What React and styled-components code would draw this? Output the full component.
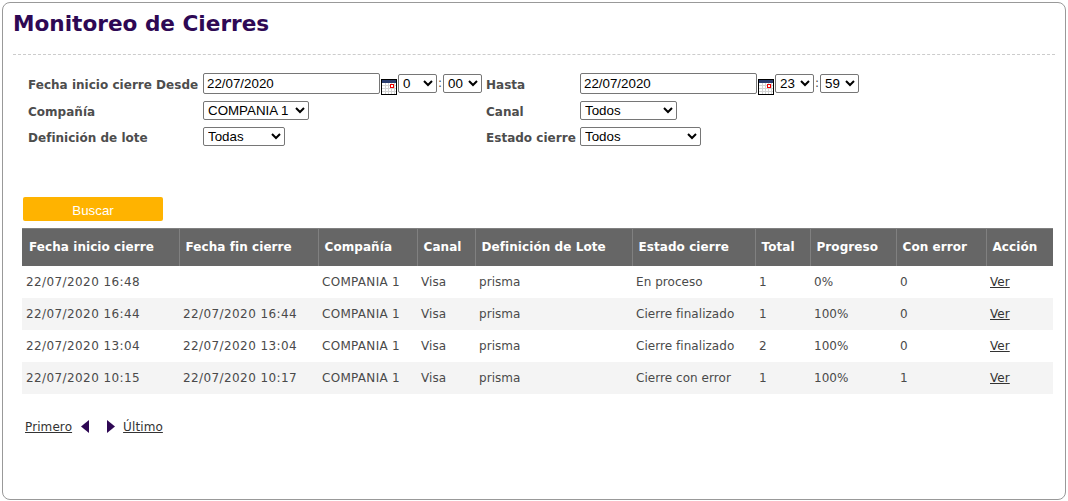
import React from "react";
import styled, { createGlobalStyle } from "styled-components";

const Global = createGlobalStyle`
  html, body { margin: 0; padding: 0; background: #fff; }
  body { font-family: "DejaVu Sans", Verdana, sans-serif; font-size: 12px; color: #4a4a4a; }
`;

const Panel = styled.div`
  box-sizing: border-box;
  width: 1064px;
  height: 498px;
  margin: 2px 0 0 2px;
  border: 1px solid #999;
  border-radius: 8px;
  padding: 0 10px;
`;
const Title = styled.h1`
  margin: 0;
  padding: 9px 0 0 0;
  height: 42px;
  box-sizing: content-box;
  font-size: 21.6px;
  line-height: 24px;
  font-weight: bold;
  color: #2e0854;
`;
const Divider = styled.hr`
  margin: 0;
  border: 0;
  border-top: 1px dashed #ccc;
`;
const Form = styled.form`
  display: grid;
  grid-template-columns: 175px 283px 94px auto;
  grid-template-rows: 28px 26px 26px;
  align-items: center;
  margin: 15px 0 0 15px;
  justify-content: start;
`;
const Label = styled.label`
  font-weight: bold;
  font-size: 12px;
  color: #4d4d4d;
  white-space: nowrap;
  letter-spacing: 0.02px;
  margin-top: 2px;
`;
const Control = styled.div`
  display: flex;
  align-items: center;
  margin-bottom: 2px;
`;
const DateInput = styled.input`
  box-sizing: border-box;
  width: 177px;
  height: 21px;
  padding: 1px 3px;
  border: 1px solid #767676;
  border-radius: 2px;
  font-family: "Liberation Sans", Arial, sans-serif;
  font-size: 13.33px;
  color: #000;
`;
const Select = styled.select`
  box-sizing: border-box;
  width: ${(p) => p.$w}px;
  height: 19px;
  font-family: "Liberation Sans", Arial, sans-serif;
  font-size: 13.33px;
  color: #000;
  background: #fff;
  border: 1px solid #767676;
  border-radius: 2px;
`;
const Colon = styled.span`
  width: 6px;
  text-align: center;
  font-size: 12px;
  color: #4a4a4a;
`;
const CalSvg = styled.svg`
  display: block;
  margin: 8px 1px 0 1px;
  flex: none;
`;
const Calendar = () => (
  <CalSvg width="16" height="16" viewBox="0 0 16 16" shapeRendering="crispEdges">
    <rect x="0.5" y="0.5" width="15" height="15" fill="#fff" stroke="#000" />
    <rect x="1" y="1" width="14" height="3" fill="#2c3e70" />
    <path d="M4.5 4v11M7.5 4v11M10.5 4v11M13.5 4v11M1 6.5h14M1 9.5h14M1 12.5h14" stroke="#d4d4d4" fill="none" />
    <rect x="9.5" y="5.5" width="3" height="3" fill="#fff" stroke="#e00" />
  </CalSvg>
);
const SearchBtn = styled.button`
  display: block;
  width: 140px;
  height: 24px;
  margin: 0 0 7px 10px;
  padding: 2px 0 0;
  border: 0;
  border-radius: 2px;
  background: #ffb300;
  color: #fff;
  font-family: "Liberation Sans", Arial, sans-serif;
  font-size: 13.33px;
`;
const Actions = styled.div`
  margin-top: 47px;
`;
const Table = styled.table`
  table-layout: fixed;
  width: 1031px;
  margin-left: 9px;
  border-collapse: collapse;
  font-size: 12px;
`;
const Th = styled.th`
  height: 37px;
  box-sizing: border-box;
  padding: 0 0 0 6px;
  background: #666;
  color: #fff;
  font-size: 12px;
  font-weight: bold;
  text-align: left;
  white-space: nowrap;
  border: 1px solid #808080;
  border-bottom: 0;
  letter-spacing: 0.07px;
  &:first-child { border-left: 0; padding-left: 7px; }
  &:last-child { border-right: 0; }
`;
const Tr = styled.tr`
  background: ${(p) => (p.$odd ? "#f4f4f4" : "#fff")};
`;
const Td = styled.td`
  height: 32px;
  padding: 0 0 0 4px;
  color: #4a4a4a;
  white-space: nowrap;
  letter-spacing: ${(p) => (p.$wide ? "0.4px" : p.$caps ? "0.3px" : "0.05px")};
`;
const Link = styled.a`
  color: #333;
  text-decoration: underline;
  margin-left: ${(p) => p.$ml || 0}px;
`;
const Pager = styled.div`
  display: flex;
  align-items: center;
  margin: 24px 0 0 12px;
  line-height: 18px;
  color: #333;
  letter-spacing: 0.1px;
`;
const Arrow = styled.svg`
  display: block;
  margin: ${(p) => p.$m};
`;

const cols = [157, 139, 99, 58, 157, 123, 55, 86, 90, 67];
const heads = ["Fecha inicio cierre", "Fecha fin cierre", "Compañía", "Canal", "Definición de Lote", "Estado cierre", "Total", "Progreso", "Con error", "Acción"];
const rows = [
  ["22/07/2020 16:48", "", "COMPANIA 1", "Visa", "prisma", "En proceso", "1", "0%", "0"],
  ["22/07/2020 16:44", "22/07/2020 16:44", "COMPANIA 1", "Visa", "prisma", "Cierre finalizado", "1", "100%", "0"],
  ["22/07/2020 13:04", "22/07/2020 13:04", "COMPANIA 1", "Visa", "prisma", "Cierre finalizado", "2", "100%", "0"],
  ["22/07/2020 10:15", "22/07/2020 10:17", "COMPANIA 1", "Visa", "prisma", "Cierre con error", "1", "100%", "1"],
];

const TimeSelects = ({ h, m, w }) => (
  <>
    <Select $w={w} defaultValue={h}><option>{h}</option></Select>
    <Colon>:</Colon>
    <Select $w={39} defaultValue={m}><option>{m}</option></Select>
  </>
);

export default function App() {
  return (
    <Panel>
      <Global />
      <Title>Monitoreo de Cierres</Title>
      <Divider />
      <Form>
        <Label>Fecha inicio cierre Desde</Label>
        <Control>
          <DateInput defaultValue="22/07/2020" />
          <Calendar />
          <TimeSelects h="0" m="00" w={39} />
        </Control>
        <Label>Hasta</Label>
        <Control>
          <DateInput defaultValue="22/07/2020" />
          <Calendar />
          <TimeSelects h="23" m="59" w={39} />
        </Control>

        <Label>Compañía</Label>
        <Control><Select $w={106}><option>COMPANIA 1</option></Select></Control>
        <Label>Canal</Label>
        <Control><Select $w={97}><option>Todos</option></Select></Control>

        <Label>Definición de lote</Label>
        <Control><Select $w={82}><option>Todas</option></Select></Control>
        <Label>Estado cierre</Label>
        <Control><Select $w={121}><option>Todos</option></Select></Control>
      </Form>
      <Actions>
        <SearchBtn type="button">Buscar</SearchBtn>
      </Actions>
      <Table>
        <colgroup>
          {cols.map((w, i) => <col key={i} style={{ width: w }} />)}
        </colgroup>
        <thead>
          <tr>{heads.map((h) => <Th key={h}>{h}</Th>)}</tr>
        </thead>
        <tbody>
          {rows.map((r, i) => (
            <Tr key={i} $odd={i % 2 === 1}>
              {r.map((c, j) => <Td key={j} $wide={j < 2} $caps={j === 2}>{c}</Td>)}
              <Td><Link href="#">Ver</Link></Td>
            </Tr>
          ))}
        </tbody>
      </Table>
      <Pager>
        <Link href="#">Primero</Link>
        <Arrow $m="0 0 0 9px" width="8" height="13" viewBox="0 0 8 13"><path d="M8 0v13L0 6.5z" fill="#2e0854" /></Arrow>
        <Arrow $m="0 0 0 18px" width="8" height="13" viewBox="0 0 8 13"><path d="M0 0v13l8-6.5z" fill="#2e0854" /></Arrow>
        <Link href="#" $ml={8}>Último</Link>
      </Pager>
    </Panel>
  );
}
